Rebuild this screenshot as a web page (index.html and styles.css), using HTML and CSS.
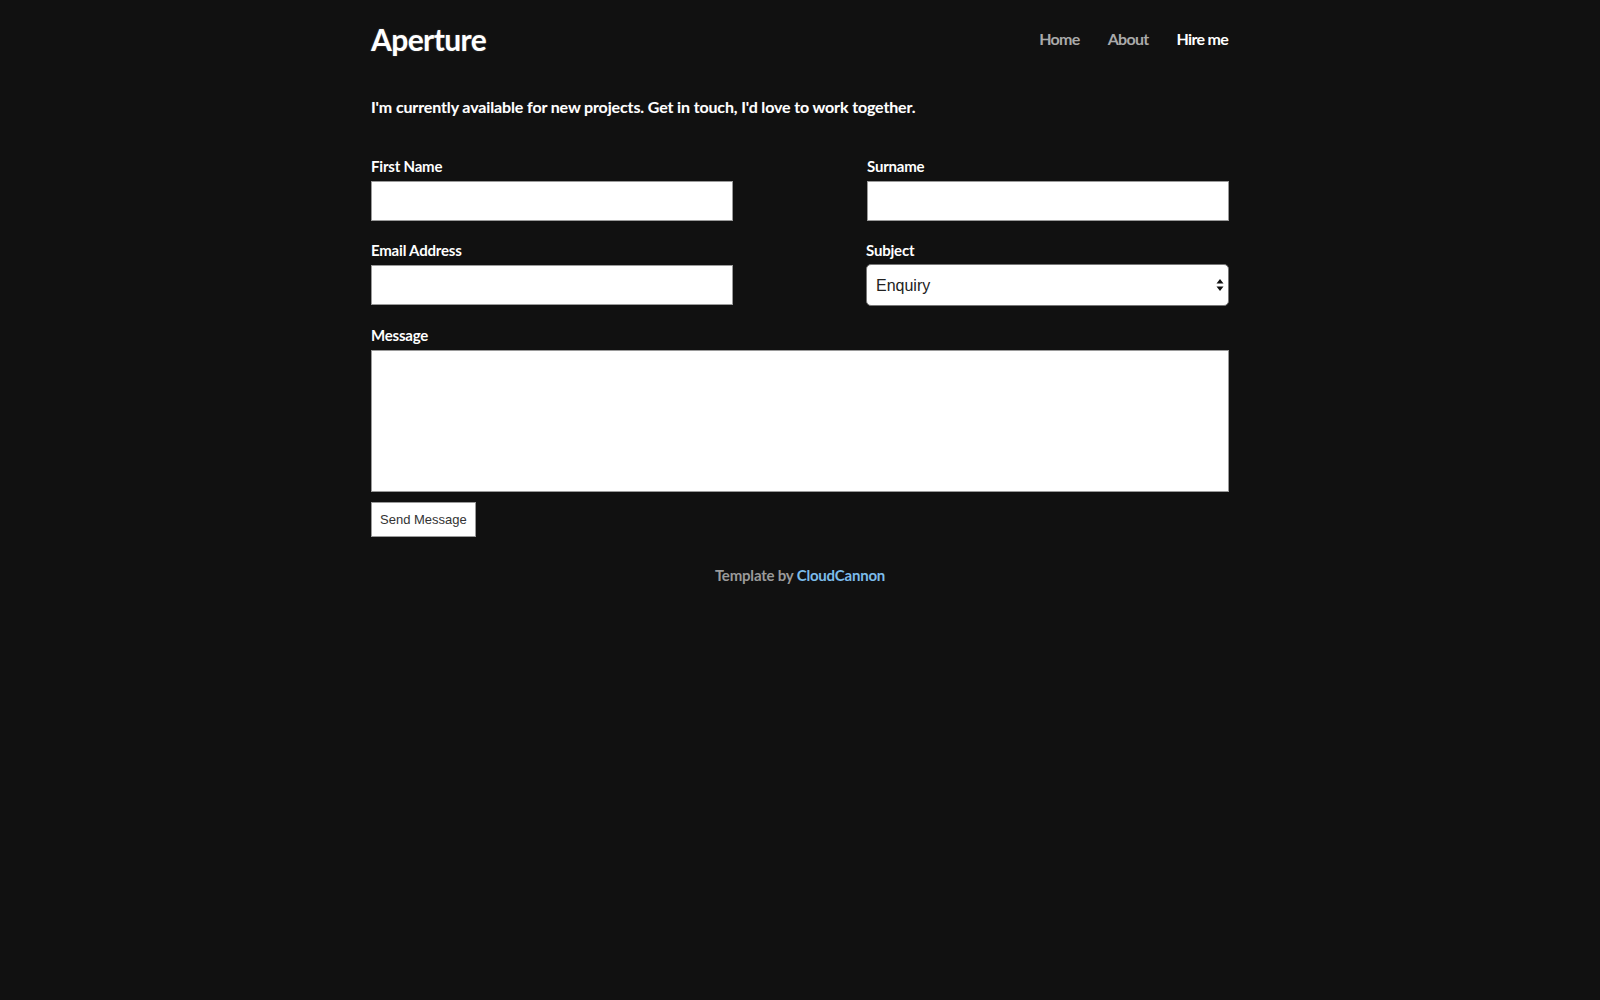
FILE: index.html
```html
<!DOCTYPE html>
<html lang="en">
<head>
<meta charset="utf-8">
<title>Hire me - Aperture</title>
<link rel="stylesheet" href="styles.css">
</head>
<body>
<div class="container">
  <header class="site-header">
    <a class="logo" href="#">Aperture</a>
    <nav class="nav">
      <a class="nav-link" href="#">Home</a>
      <a class="nav-link" href="#">About</a>
      <a class="nav-link active" href="#">Hire me</a>
    </nav>
  </header>
  <p class="intro">I'm currently available for new projects. Get in touch, I'd love to work together.</p>
  <form class="contact-form">
    <div class="field half">
      <label class="label" for="first">First Name</label>
      <input class="input" id="first" type="text">
    </div>
    <div class="field half">
      <label class="label" for="surname">Surname</label>
      <input class="input" id="surname" type="text">
    </div>
    <div class="field half">
      <label class="label" for="email">Email Address</label>
      <input class="input" id="email" type="email">
    </div>
    <div class="field half wide">
      <label class="label" for="subject">Subject</label>
      <div class="select-wrap">
        <select class="select" id="subject">
          <option>Enquiry</option>
        </select>
        <svg class="select-arrows" width="8" height="14" viewBox="0 0 8 14"><path d="M4 1 L7.5 5.5 H0.5 Z M4 13 L7.5 8.5 H0.5 Z" fill="#111"/></svg>
      </div>
    </div>
    <div class="field full message-field">
      <label class="label" for="message">Message</label>
      <textarea class="textarea" id="message"></textarea>
    </div>
    <div class="field full">
      <button class="button" type="button">Send Message</button>
    </div>
  </form>
  <footer class="site-footer">Template by <a class="footer-link" href="#">CloudCannon</a></footer>
</div>
</body>
</html>
```

FILE: styles.css
```css
html, body {
  margin: 0;
  padding: 0;
  background: #111111;
}
body {
  font-family: Lato, "Open Sans", sans-serif;
  color: #fff;
}
.container {
  width: 858px;
  margin: 0 auto;
}
.site-header {
  display: flex;
  justify-content: space-between;
  align-items: center;
  height: 77px;
}
.logo {
  color: #fff;
  text-decoration: none;
  font-size: 30px;
  font-weight: 700;
  letter-spacing: -0.6px;
  text-shadow: 0 0 2px rgba(255,255,255,0.25);
}
.nav {
  display: flex;
  gap: 28px;
  padding-right: 1px;
}
.nav-link {
  color: #aaa;
  text-decoration: none;
  font-size: 16px;
  font-weight: 700;
  letter-spacing: -0.7px;
}
.nav-link.active {
  color: #fff;
}
.intro {
  margin: 19px 0 0 0;
  font-size: 16px;
  font-weight: 700;
  letter-spacing: -0.13px;
  line-height: 22px;
  text-shadow: 0 0 1px rgba(255,255,255,0.2);
}
.contact-form {
  display: flex;
  flex-wrap: wrap;
  justify-content: space-between;
  margin-top: 38px;
}
.field {
  display: flex;
  flex-direction: column;
  margin-bottom: 19px;
}
.field.half {
  width: 362px;
}
.field.wide {
  width: 363px;
}
.field.full {
  width: 100%;
}
.message-field {
  margin-bottom: 10px;
}
.label {
  font-size: 15px;
  font-weight: 700;
  letter-spacing: -0.2px;
  line-height: 20px;
  margin-bottom: 5px;
}
.input {
  box-sizing: border-box;
  height: 40px;
  margin: 0;
  border: 1px solid #9a9a9a;
  background: #fff;
  border-radius: 0;
  padding: 0 8px;
}
.select-wrap {
  position: relative;
  height: 42px;
  margin-top: -1px;
}
.select {
  box-sizing: border-box;
  width: 100%;
  height: 42px;
  -webkit-appearance: none;
  appearance: none;
  background: #fff;
  border: 1px solid #777;
  border-radius: 5px;
  padding: 0 9px;
  font-family: "Liberation Sans", Arial, sans-serif;
  font-size: 16px;
  color: #222;
}
.select-arrows {
  position: absolute;
  right: 5px;
  top: 14px;
  pointer-events: none;
}
.textarea {
  box-sizing: border-box;
  height: 142px;
  margin: 0;
  border: 1px solid #9a9a9a;
  background: #fff;
  resize: none;
}
.button {
  align-self: flex-start;
  box-sizing: border-box;
  height: 35px;
  margin: 0;
  padding: 0 8px;
  background: #fff;
  border: 1px solid #9a9a9a;
  border-radius: 0;
  font-family: "Liberation Sans", Arial, sans-serif;
  font-size: 13px;
  color: #333;
}
.site-footer {
  text-align: center;
  margin-top: 10px;
  font-size: 15px;
  font-weight: 700;
  letter-spacing: -0.2px;
  color: #9a9a9a;
}
.footer-link {
  color: #7cbcea;
  text-decoration: none;
}
```
